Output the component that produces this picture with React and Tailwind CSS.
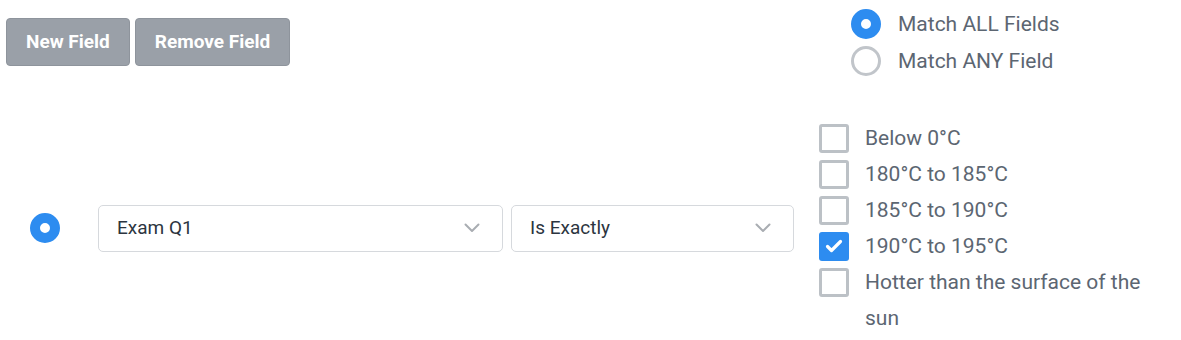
import React from "react";

const font = { fontFamily: "Roboto, 'Noto Sans', sans-serif" };

function Radio({ checked }) {
  return checked ? (
    <span className="w-[30px] h-[30px] rounded-full border-[10px] border-[#2d8cf0] bg-white shrink-0" />
  ) : (
    <span className="w-[30px] h-[30px] rounded-full border-[3px] border-[#c1c5ca] bg-white shrink-0" />
  );
}

function Checkbox({ checked }) {
  if (checked) {
    return (
      <span className="w-[30px] h-[29px] rounded-[3px] bg-[#2d8cf0] flex items-center justify-center shrink-0">
        <svg width="18" height="14" viewBox="0 0 18 14" fill="none">
          <path d="M2.5 7.5L6.5 11.5L15.5 2.5" stroke="white" strokeWidth="3.2" strokeLinecap="round" strokeLinejoin="round" />
        </svg>
      </span>
    );
  }
  return <span className="w-[30px] h-[29px] rounded-[3px] border-[3px] border-[#bcc1c6] bg-white shrink-0" />;
}

function Select({ value, width }) {
  return (
    <div className={`${width} h-[47px] border border-[#d6d9dd] rounded-[5px] bg-white flex items-center justify-between pl-[18px] pr-[22px]`}>
      <span className="text-[19px] text-[#2c3540]">{value}</span>
      <svg width="16" height="10" viewBox="0 0 16 10" fill="none">
        <path d="M1.5 1.5L8 8L14.5 1.5" stroke="#a9adb2" strokeWidth="2" strokeLinecap="round" strokeLinejoin="round" />
      </svg>
    </div>
  );
}

const options = [
  { label: "Below 0°C", checked: false },
  { label: "180°C to 185°C", checked: false },
  { label: "185°C to 190°C", checked: false },
  { label: "190°C to 195°C", checked: true },
  { label: "Hotter than the surface of the sun", checked: false },
];

export default function App() {
  return (
    <div className="w-[1181px] h-[340px] bg-white overflow-hidden" style={font}>
      {/* top row */}
      <div className="flex">
        <div className="w-[851px] flex gap-[5px] pl-[6px] pt-[18px]">
          <button className="h-[48px] px-[19px] rounded-[4px] bg-[#9aa0a8] border border-[#8e949c] text-white text-[19px] font-bold">
            New Field
          </button>
          <button className="h-[48px] px-[19px] rounded-[4px] bg-[#9aa0a8] border border-[#8e949c] text-white text-[19px] font-bold">
            Remove Field
          </button>
        </div>
        <div className="pt-[9px] flex flex-col gap-[7px]">
          <label className="flex items-center gap-[17px] leading-[30px]">
            <Radio checked />
            <span className="text-[21px] text-[#5c6672]">Match ALL Fields</span>
          </label>
          <label className="flex items-center gap-[17px] leading-[30px]">
            <Radio />
            <span className="text-[21px] text-[#5c6672]">Match ANY Field</span>
          </label>
        </div>
      </div>

      {/* field row */}
      <div className="flex items-center mt-[44px]">
        <div className="w-[98px] pl-[30px] flex">
          <Radio checked />
        </div>
        <div className="flex gap-[8px]">
          <Select value="Exam Q1" width="w-[405px]" />
          <Select value="Is Exactly" width="w-[283px]" />
        </div>
        <div className="ml-[25px] w-[330px] flex flex-col">
          {options.map((o) => (
            <label key={o.label} className="flex items-start gap-[16px]">
              <span className="h-[36px] flex items-center">
                <Checkbox checked={o.checked} />
              </span>
              <span className="text-[21px] leading-[36px] text-[#5c6672]">{o.label}</span>
            </label>
          ))}
        </div>
      </div>
    </div>
  );
}
